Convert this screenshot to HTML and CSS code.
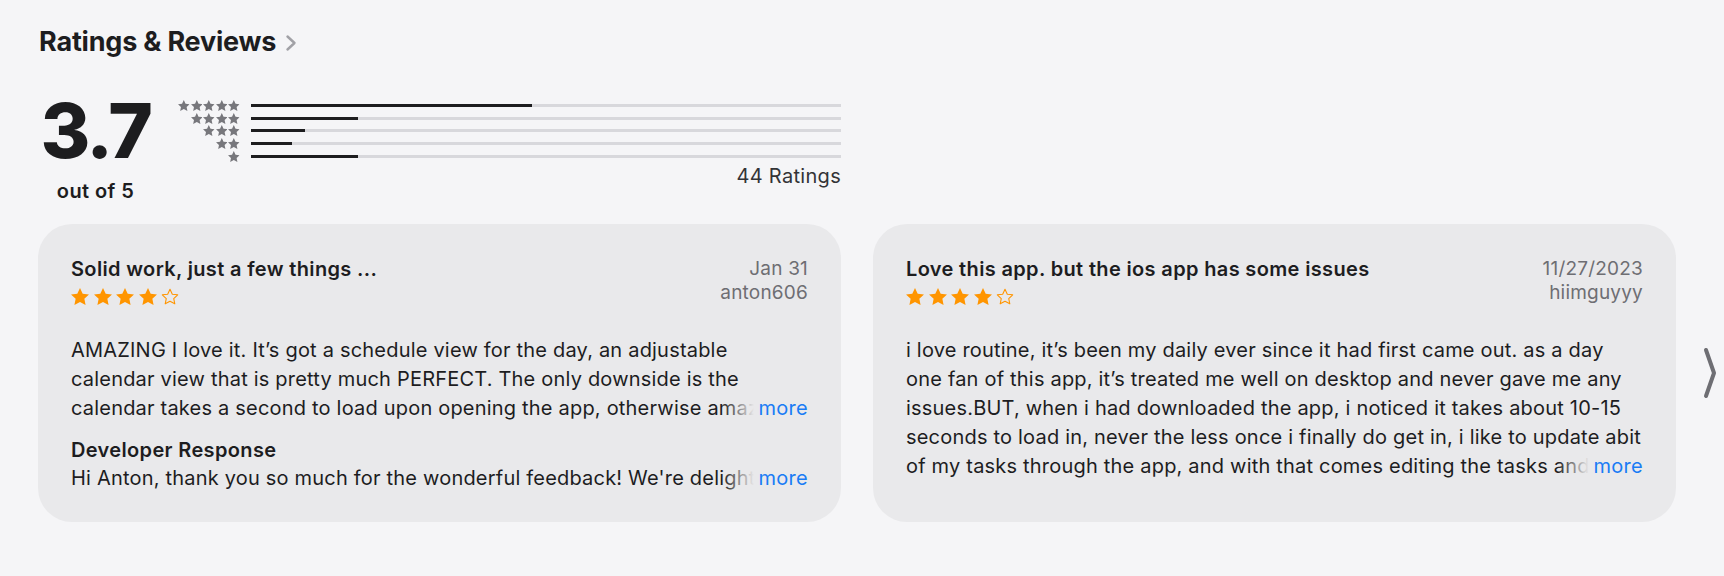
FILE: index.html
```html
<!DOCTYPE html>
<html lang="en">
<head>
<meta charset="utf-8">
<title>Ratings &amp; Reviews</title>
<link rel="stylesheet" href="styles.css">
</head>
<body>
<svg width="0" height="0" class="defs" aria-hidden="true">
  <defs>
    <symbol id="star" viewBox="1.7 1.6 20.6 19.5">
      <path d="M12 1.6l3.1 6.6 7.2.8-5.3 5 1.4 7.1L12 17.6l-6.4 3.5 1.4-7.1-5.3-5 7.2-.8z"/>
    </symbol>
    <symbol id="star-o" viewBox="1.2 1.1 21.6 20.5">
      <path d="M12 2.6l2.8 6 6.5.7-4.8 4.5 1.3 6.4L12 17l-5.8 3.2 1.3-6.4-4.8-4.5 6.5-.7z" fill="none" stroke="currentColor" stroke-width="1.3" stroke-linejoin="round"/>
    </symbol>
  </defs>
</svg>
<main class="page">
  <h2 class="section-title">Ratings &amp; Reviews
    <svg class="title-chev" viewBox="0 0 12 18" aria-hidden="true"><path d="M2.5 2.5l7 6.5-7 6.5" fill="none" stroke="currentColor" stroke-width="2.4" stroke-linecap="round" stroke-linejoin="round"/></svg>
  </h2>

  <section class="summary">
    <div class="score">
      <div class="score-num">3.7</div>
      <div class="score-label">out of 5</div>
    </div>
    <div class="histogram">
      <div class="hist-rows">
        <div class="hist-row">
          <div class="hist-stars"><svg><use href="#star"/></svg><svg><use href="#star"/></svg><svg><use href="#star"/></svg><svg><use href="#star"/></svg><svg><use href="#star"/></svg></div>
          <div class="bar"><div class="bar-fill" style="width:47.7%"></div></div>
        </div>
        <div class="hist-row">
          <div class="hist-stars"><svg><use href="#star"/></svg><svg><use href="#star"/></svg><svg><use href="#star"/></svg><svg><use href="#star"/></svg></div>
          <div class="bar"><div class="bar-fill" style="width:18.1%"></div></div>
        </div>
        <div class="hist-row">
          <div class="hist-stars"><svg><use href="#star"/></svg><svg><use href="#star"/></svg><svg><use href="#star"/></svg></div>
          <div class="bar"><div class="bar-fill" style="width:9.1%"></div></div>
        </div>
        <div class="hist-row">
          <div class="hist-stars"><svg><use href="#star"/></svg><svg><use href="#star"/></svg></div>
          <div class="bar"><div class="bar-fill" style="width:6.9%"></div></div>
        </div>
        <div class="hist-row">
          <div class="hist-stars"><svg><use href="#star"/></svg></div>
          <div class="bar"><div class="bar-fill" style="width:18.1%"></div></div>
        </div>
      </div>
      <div class="hist-count">44 Ratings</div>
    </div>
  </section>

  <section class="reviews">
    <article class="card">
      <header class="card-head">
        <div class="card-head-left">
          <h3 class="review-title">Solid work, just a few things ...</h3>
          <div class="rating"><svg><use href="#star"/></svg><svg><use href="#star"/></svg><svg><use href="#star"/></svg><svg><use href="#star"/></svg><svg class="empty"><use href="#star-o"/></svg></div>
        </div>
        <div class="meta">
          <div>Jan 31</div>
          <div>anton606</div>
        </div>
      </header>
      <div class="clip clip-3">
        <p class="review-text">AMAZING I love it. It’s got a schedule view for the day, an adjustable calendar view that is pretty much PERFECT. The only downside is the calendar takes a second to load upon opening the app, otherwise amazing app and I would definitely recommend it to anyone looking for a planner.</p>
        <span class="more">more</span>
      </div>
      <h4 class="dev-title">Developer Response</h4>
      <div class="clip clip-1">
        <p class="dev-text">Hi Anton, thank you so much for the wonderful feedback! We're delighted to hear you love the schedule and calendar views.</p>
        <span class="more">more</span>
      </div>
    </article>

    <article class="card">
      <header class="card-head">
        <div class="card-head-left">
          <h3 class="review-title">Love this app. but the ios app has some issues</h3>
          <div class="rating"><svg><use href="#star"/></svg><svg><use href="#star"/></svg><svg><use href="#star"/></svg><svg><use href="#star"/></svg><svg class="empty"><use href="#star-o"/></svg></div>
        </div>
        <div class="meta">
          <div>11/27/2023</div>
          <div>hiimguyyy</div>
        </div>
      </header>
      <div class="clip clip-5">
        <p class="review-text">i love routine, it’s been my daily ever since it had first came out. as a day one fan of this app, it’s treated me well on desktop and never gave me any issues.BUT, when i had downloaded the app, i noticed it takes about 10-15 seconds to load in, never the less once i finally do get in, i like to update abit of my tasks through the app, and with that comes editing the tasks and sometimes the app freezes.</p>
        <span class="more">more</span>
      </div>
    </article>

    <button class="next" aria-label="Next">
      <svg viewBox="0 0 14 52" aria-hidden="true"><path d="M3 3l8 23-8 23" fill="none" stroke="currentColor" stroke-width="4" stroke-linecap="round" stroke-linejoin="round"/></svg>
    </button>
  </section>
</main>
</body>
</html>
```
FILE: styles.css
```css
* { box-sizing: border-box; }

html, body {
  margin: 0;
  padding: 0;
  background: #f5f5f7;
}

body {
  font-family: Inter, "Noto Sans", "Liberation Sans", sans-serif;
  color: #1d1d1f;
}

.defs {
  position: absolute;
  width: 0;
  height: 0;
  overflow: hidden;
}

.page {
  padding: 26px 0 0 38px;
}

.section-title {
  display: flex;
  align-items: center;
  gap: 9px;
  margin: 0 0 0 1px;
  font-size: 27px;
  line-height: 32px;
  font-weight: 700;
  letter-spacing: -0.2px;
  color: #1d1d1f;
}

.title-chev {
  width: 12px;
  height: 18px;
  color: #a1a1a6;
  margin-top: 2px;
}

/* Summary */
.summary {
  display: flex;
  width: 803px;
  margin-top: 34px;
}

.score {
  width: 115px;
  display: flex;
  flex-direction: column;
  align-items: center;
}

.score-num {
  font-size: 76px;
  line-height: 76px;
  height: 76px;
  font-weight: 800;
  letter-spacing: -2.5px;
  color: #1d1d1f;
}

.score-label {
  margin-top: 11px;
  font-size: 20px;
  line-height: 24px;
  font-weight: 600;
  letter-spacing: 0.4px;
  color: #1d1d1f;
}

.histogram {
  flex: 1;
  display: flex;
  flex-direction: column;
  margin-left: 25px;
  padding-top: 7px;
}

.hist-rows {
  display: flex;
  flex-direction: column;
}

.hist-row {
  display: flex;
  align-items: center;
  height: 12.75px;
  gap: 11px;
}

.hist-stars {
  width: 62px;
  display: flex;
  justify-content: flex-end;
  gap: 1px;
  color: #77777c;
}

.hist-stars svg {
  width: 11.6px;
  height: 11px;
  fill: currentColor;
}

.bar {
  flex: 1;
  height: 3px;
  background: #d8d8dc;
}

.bar-fill {
  height: 100%;
  background: #1d1d1f;
}

.hist-count {
  align-self: flex-end;
  margin-top: 1px;
  font-size: 20px;
  line-height: 24px;
  letter-spacing: 0.3px;
  color: #333336;
}

/* Reviews */
.reviews {
  display: flex;
  align-items: center;
  gap: 32px;
  margin-top: 21px;
}

.card {
  width: 803px;
  height: 298px;
  flex: none;
  background: #e9e9eb;
  border-radius: 34px;
  padding: 33px 33px 0 33px;
}

.card-head {
  display: flex;
  justify-content: space-between;
  align-items: flex-start;
}

.review-title {
  margin: 0;
  font-size: 20px;
  line-height: 24px;
  font-weight: 600;
  letter-spacing: 0.35px;
  color: #1d1d1f;
}

.rating {
  display: flex;
  gap: 4.5px;
  margin-top: 7px;
  color: #ff9500;
}

.rating svg {
  width: 18px;
  height: 17px;
  fill: currentColor;
}

.rating svg.empty {
  fill: none;
}

.meta {
  text-align: right;
  font-size: 19px;
  line-height: 24px;
  letter-spacing: 0.2px;
  color: #6e6e73;
}

.clip {
  position: relative;
  overflow: hidden;
  margin-top: 31px;
}

.clip-3 { height: 87px; }
.clip-5 { height: 145px; }
.clip-1 { height: 28px; margin-top: 0; }

.review-text,
.dev-text {
  margin: 0;
  font-size: 20px;
  line-height: 29px;
  letter-spacing: 0.2px;
  color: #1d1d1f;
}

.dev-text {
  line-height: 28px;
}

.more {
  position: absolute;
  right: 0;
  bottom: 0;
  padding-left: 36px;
  font-size: 20px;
  line-height: 29px;
  letter-spacing: 0.3px;
  color: #1a7cf5;
  background: linear-gradient(90deg, rgba(233, 233, 235, 0) 0, #e9e9eb 32px);
}

.clip-1 .more {
  line-height: 28px;
}

.dev-title {
  margin: 13px 0 0;
  font-size: 20px;
  line-height: 28px;
  font-weight: 600;
  letter-spacing: 0.35px;
  color: #1d1d1f;
}

.next {
  flex: none;
  margin-left: -5px;
  padding: 0;
  border: 0;
  background: none;
  color: #6e6e73;
  width: 14px;
  height: 52px;
}

.next svg {
  width: 14px;
  height: 52px;
  display: block;
}
```
